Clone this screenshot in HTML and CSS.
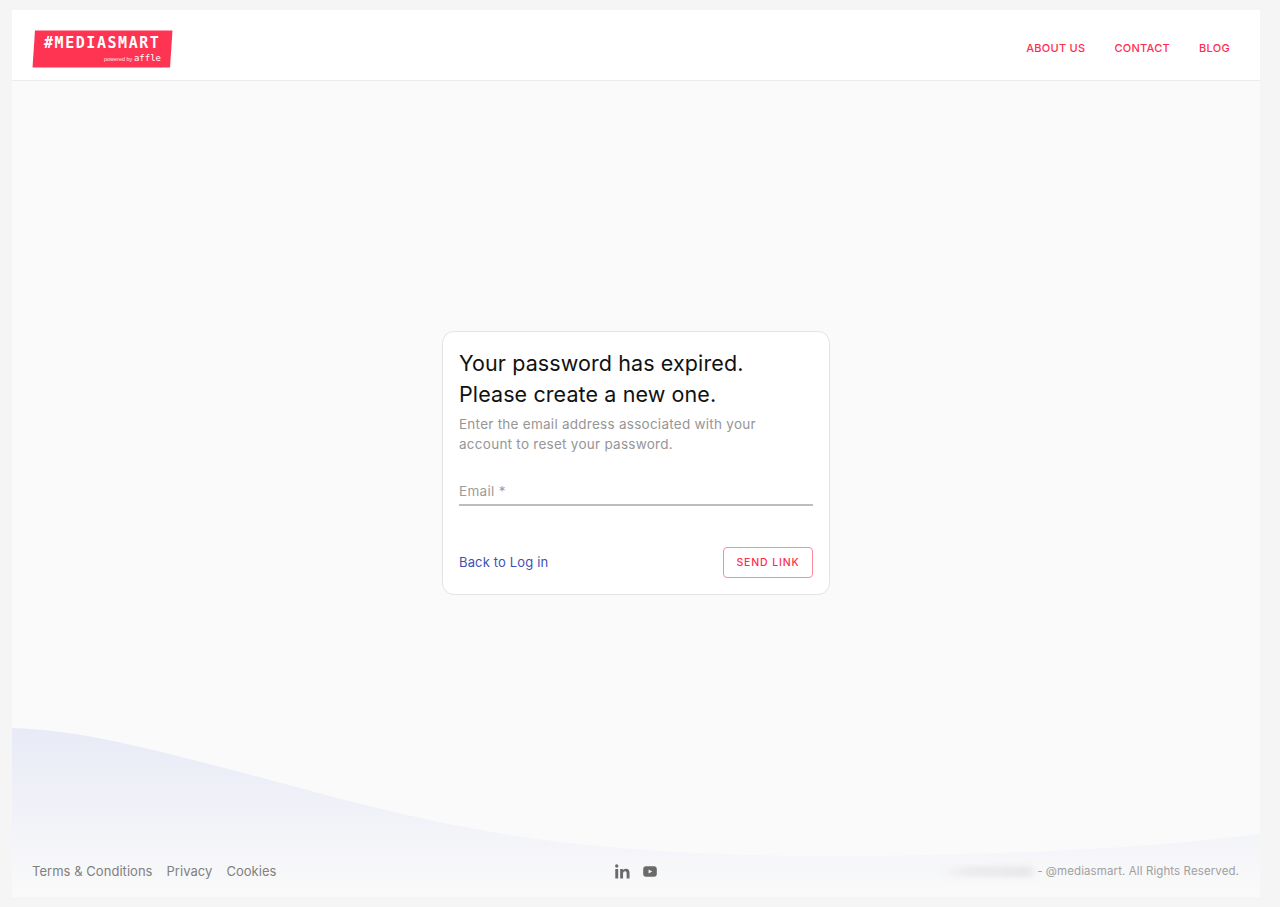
FILE: index.html
```html
<!DOCTYPE html>
<html lang="en">
<head>
<meta charset="utf-8">
<title>Mediasmart</title>
<link rel="stylesheet" href="styles.css">
</head>
<body>
<div class="app">
  <svg class="wave" viewBox="0 0 1248 170" preserveAspectRatio="none" aria-hidden="true">
    <defs>
      <linearGradient id="waveFill" x1="0" y1="0" x2="0" y2="1">
        <stop offset="0" stop-color="#e8eaf6"/>
        <stop offset="1" stop-color="#fafafa"/>
      </linearGradient>
    </defs>
    <path d="M0 0C60 2 120 16 200 37C330 71 420 100 560 116C700 132 850 130 980 126C1090 122 1180 116 1248 106V170H0Z" fill="url(#waveFill)"/>
  </svg>
  <header class="topbar">
    <a class="logo" href="#">
      <svg class="logo-bg" viewBox="0 0 141 38" aria-hidden="true"><polygon points="3,0.5 140.500,0.500 138,37.500 0.500,37.500" fill="#ff3352"/></svg>
      <span class="logo-name">#MEDIASMART</span>
      <span class="logo-sub">powered by <b>affle</b></span>
    </a>
    <nav class="nav">
      <a href="#">ABOUT US</a>
      <a href="#">CONTACT</a>
      <a href="#">BLOG</a>
    </nav>
  </header>
  <main class="main">
    <section class="card">
      <h1>Your password has expired.<br>Please create a new one.</h1>
      <p class="hint">Enter the email address associated with your<br>account to reset your password.</p>
      <div class="field">Email *</div>
      <div class="actions">
        <a class="back" href="#">Back to Log in</a>
        <button class="send" type="button">SEND LINK</button>
      </div>
    </section>
  </main>
  <footer class="footer">
    <div class="links">
      <a href="#">Terms &amp; Conditions</a>
      <a href="#">Privacy</a>
      <a href="#">Cookies</a>
    </div>
    <div class="social">
      <svg class="in" viewBox="0 0 16 16" aria-hidden="true"><path d="M0.300 5.200H3.400V15.500H0.300ZM1.850 0.300A1.800 1.800 0 1 1 1.850 3.900A1.800 1.800 0 0 1 1.850 0.300ZM5.500 5.200H8.450V6.600C8.900 5.750 10 4.950 11.500 4.950C14.700 4.950 15.500 6.950 15.500 9.700V15.500H12.400V10.400C12.400 9.100 12.300 7.600 10.700 7.600C9.050 7.600 8.600 8.800 8.600 10.300V15.500H5.500Z" fill="#6a6a6a"/></svg>
      <svg class="yt" viewBox="0 0 14 11" aria-hidden="true"><path fill-rule="evenodd" d="M3 0.200H11C12.700 0.200 13.800 1.300 13.800 3V8C13.800 9.700 12.700 10.800 11 10.800H3C1.300 10.800 0.200 9.700 0.200 8V3C0.200 1.300 1.300 0.200 3 0.200ZM5.600 3.400V7.600L9.200 5.500Z" fill="#6a6a6a"/></svg>
    </div>
    <div class="copy"><span class="redacted"></span><span>- @mediasmart. All Rights Reserved.</span></div>
  </footer>
</div>
</body>
</html>
```
FILE: styles.css
```css
* { box-sizing: border-box; }
html, body { height: 100%; }
body {
  margin: 0;
  padding: 10px 20px 10px 12px;
  background: #f5f5f5;
  font-family: "Inter", "Liberation Sans", sans-serif;
}
a { text-decoration: none; color: inherit; }

.app {
  position: relative;
  height: 887px;
  display: flex;
  flex-direction: column;
  background: #fafafa;
  overflow: hidden;
}
.wave {
  position: absolute;
  left: 0;
  bottom: 0;
  width: 100%;
  height: 169px;
}

.topbar {
  position: relative;
  flex: none;
  height: 71px;
  padding: 20px 30px 0 20px;
  display: flex;
  justify-content: space-between;
  align-items: flex-start;
  background: #fff;
  border-bottom: 1px solid #ececec;
}
.logo {
  position: relative;
  display: block;
  width: 141px;
  height: 38px;
}
.logo-bg { position: absolute; inset: 0; width: 141px; height: 38px; }
.logo-name {
  position: absolute;
  left: 12px;
  top: 4px;
  font: 700 15px/18px "DejaVu Sans Mono", monospace;
  letter-spacing: 1.55px;
  color: #fff;
  white-space: nowrap;
}
.logo-sub {
  position: absolute;
  right: 12px;
  top: 23px;
  font: 400 5.500px/10px "Liberation Sans", sans-serif;
  color: #ffe3e7;
  white-space: nowrap;
}
.logo-sub b {
  font: 400 9px/10px "DejaVu Sans Mono", monospace;
  color: #fff;
}
.nav {
  display: flex;
  gap: 29px;
  margin-top: 11px;
  font-size: 11px;
  line-height: 14px;
  font-weight: 500;
  letter-spacing: 0.28px;
  color: #ff2d4f;
}

.main {
  position: relative;
  flex: 1;
  display: flex;
  align-items: center;
  justify-content: center;
}
.card {
  width: 388px;
  height: 264px;
  padding: 16px;
  background: #fff;
  border: 1px solid #e4e4e4;
  border-radius: 12px;
}
.card h1 {
  margin: 0;
  font: 400 21.5px/31px "Inter", sans-serif;
  letter-spacing: 0.1px;
  color: #111;
}
.hint {
  margin: 4px 0 0;
  font-size: 13.5px;
  line-height: 20px;
  letter-spacing: 0.26px;
  color: #969696;
}
.field {
  height: 31px;
  margin-top: 21px;
  padding-top: 6px;
  font-size: 13.5px;
  line-height: 20px;
  letter-spacing: 0.3px;
  color: #9c9c9c;
  border-bottom: 2px solid #bdbdbd;
}
.actions {
  margin-top: 41px;
  display: flex;
  justify-content: space-between;
  align-items: center;
}
.back { padding-bottom: 2px; font-size: 13px; letter-spacing: 0.15px; color: #3f51b5; }
.send {
  width: 90px;
  height: 31px;
  padding: 0;
  background: #fff;
  border: 1px solid #ff8a99;
  border-radius: 4px;
  font: 500 10.500px/14px "Inter", sans-serif;
  letter-spacing: 0.85px;
  color: #ff2d4f;
}

.footer {
  position: relative;
  flex: none;
  height: 52px;
  padding: 0 21px 0 20px;
  display: grid;
  grid-template-columns: 1fr auto 1fr;
  align-items: center;
}
.links {
  display: flex;
  gap: 14px;
  font-size: 13px;
  letter-spacing: 0.04px;
  color: #808080;
}
.social {
  display: flex;
  align-items: center;
  gap: 13px;
}
.in { width: 15px; height: 15px; }
.yt { width: 14px; height: 11px; }
.copy {
  display: flex;
  justify-content: flex-end;
  align-items: center;
  gap: 2px;
  font-size: 11.500px;
  letter-spacing: 0.1px;
  color: #a0a0a0;
}
.redacted {
  width: 94px;
  height: 11px;
  background: linear-gradient(90deg, #f6f6f8, #ececee 30%, #e8e8ea 90%, #efeff0);
  border-radius: 6px;
  filter: blur(2.500px);
}
```
